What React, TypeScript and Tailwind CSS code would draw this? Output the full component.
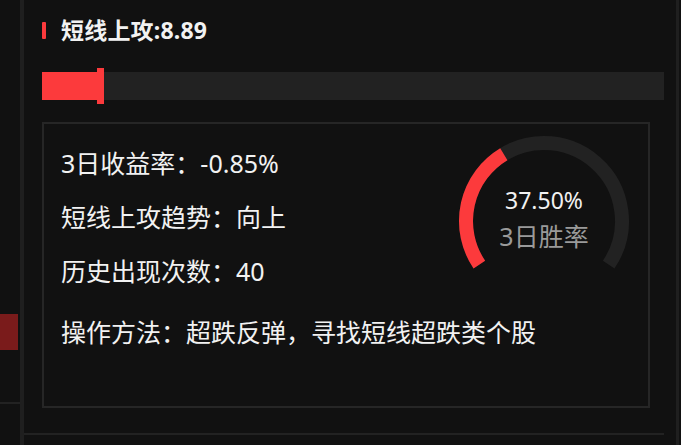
import React from 'react';

const stats = [
  { label: '3日收益率', value: '-0.85%' },
  { label: '短线上攻趋势', value: '向上' },
  { label: '历史出现次数', value: '40' },
];

function Gauge({ percent }: { percent: number }) {
  // dial opening at the bottom
  const cx = 90;
  const cy = 90;
  const r = 78;
  const start = 214;
  const span = 248;
  const pt = (deg: number) => {
    const a = (deg * Math.PI) / 180;
    return [cx + r * Math.cos(a), cy - r * Math.sin(a)];
  };
  const [sx, sy] = pt(start);
  const [ex, ey] = pt(start - span);
  const [vx, vy] = pt(start - (span * percent) / 100);
  const large = (span * percent) / 100 > 180 ? 1 : 0;

  return (
    <div className="relative w-[180px] h-[180px] mt-[7px] mr-[14px] shrink-0">
      <svg width="180" height="180" viewBox="0 0 180 180" className="absolute inset-0">
        <path d={`M ${sx} ${sy} A ${r} ${r} 0 1 1 ${ex} ${ey}`} fill="none" stroke="#222222" strokeWidth={14} />
        <path d={`M ${sx} ${sy} A ${r} ${r} 0 ${large} 1 ${vx} ${vy}`} fill="none" stroke="#fc3a3c" strokeWidth={14} />
      </svg>
      <div className="absolute inset-0 flex flex-col items-center pt-[55px]">
        <span className="text-[23px] leading-[28px] text-[#f2f2f2]">{percent.toFixed(2)}%</span>
        <span className="mt-[7px] text-[25px] leading-[30px] text-[#9a9a9a]">3日胜率</span>
      </div>
    </div>
  );
}

export default function App() {
  return (
    <div className="w-[681px] h-[445px] bg-[#111111] flex overflow-hidden font-['Noto_Sans','Noto_Sans_CJK_SC',sans-serif]">
      {/* Left sidebar sliver */}
      <div className="w-[20px] flex flex-col">
        <div className="h-[314px]" />
        <div className="w-[18px] h-[36px] bg-[#7a1b1b]" />
        <div className="h-[52px]" />
        <div className="h-[2px] bg-[#222222]" />
      </div>
      <div className="w-[4px] bg-[#1f1f1f]" />

      {/* Main panel */}
      <div className="w-[652px] flex flex-col pr-[12px]">
        <div className="ml-[18px] mt-[16px] flex items-center h-[28px]">
          <div className="w-[4px] h-[17px] rounded-[1px] bg-[#fc3a3c]" />
          <span className="ml-[15px] text-[23px] font-bold text-[#f2f2f2] leading-[28px] tracking-[0.2px]">短线上攻:8.89</span>
        </div>

        <div className="ml-[18px] mt-[28px] h-[28px] bg-[#222222] relative">
          <div className="h-full w-[55px] bg-[#fc3a3c]" />
          <div className="absolute left-[55px] top-[-4px] w-[7px] h-[36px] bg-[#fc3a3c]" />
        </div>

        <div className="ml-[18px] mt-[22px] w-[608px] h-[286px] border-2 border-[#262626] flex">
          <div className="flex-1 min-w-0 pl-[17px] pt-[12px] text-[#f2f2f2] text-[25px]">
            {stats.map((s) => (
              <div key={s.label} className="leading-[54px] whitespace-nowrap">
                {s.label}：{s.value}
              </div>
            ))}
            <div className="mt-[7px] leading-[54px] whitespace-nowrap">操作方法：超跌反弹，寻找短线超跌类个股</div>
          </div>
          <Gauge percent={37.5} />
        </div>

        <div className="mt-[25px] h-[2px] bg-[#222222]" />
      </div>

      <div className="w-[3px] bg-[#1f1f1f]" />
    </div>
  );
}
